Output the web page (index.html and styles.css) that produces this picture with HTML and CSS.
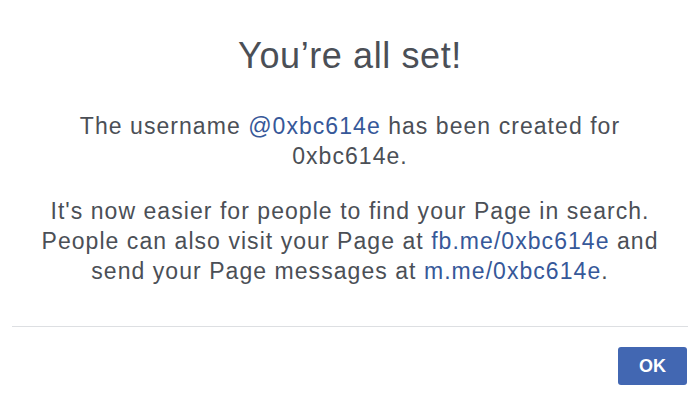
FILE: index.html
```html
<!DOCTYPE html>
<html>
<head>
<meta charset="utf-8">
<link rel="stylesheet" href="styles.css">
</head>
<body>
<div class="dialog">
  <div class="content">
    <h1 class="title">You’re all set!</h1>
    <p class="msg">The username <a class="link">@0xbc614e</a> has been created for 0xbc614e.</p>
    <p class="msg">It's now easier for people to find your Page in search. People can also visit your Page at <a class="link">fb.me/0xbc614e</a> and send your Page messages at <a class="link">m.me/0xbc614e</a>.</p>
  </div>
  <div class="footer">
    <button class="ok">OK</button>
  </div>
</div>
</body>
</html>
```

FILE: styles.css
```css
html, body {
  margin: 0;
  padding: 0;
  background: #ffffff;
}
body {
  font-family: "Liberation Sans", Arial, sans-serif;
  color: #4b4f56;
}
.dialog {
  width: 700px;
  height: 404px;
  padding: 0 12px;
  box-sizing: border-box;
  display: flex;
  flex-direction: column;
}
.content {
  padding: 36px 18px 0;
  height: 327px;
  box-sizing: border-box;
  border-bottom: 1px solid #dddfe2;
  text-align: center;
}
.title {
  margin: 0 0 35px;
  font-size: 36px;
  line-height: 40px;
  font-weight: normal;
  letter-spacing: 0.6px;
  color: #4b4f56;
}
.msg {
  margin: 0 0 25px;
  font-size: 23px;
  line-height: 30px;
  letter-spacing: 1.05px;
}
.link {
  color: #365899;
  text-decoration: none;
}
.footer {
  display: flex;
  justify-content: flex-end;
  padding-top: 20px;
}
.ok {
  width: 69px;
  height: 38px;
  margin-right: 1px;
  border: none;
  border-radius: 3px;
  background: #4267b2;
  color: #ffffff;
  font-family: "Liberation Sans", Arial, sans-serif;
  font-weight: bold;
  font-size: 18px;
  padding: 0;
}
```
